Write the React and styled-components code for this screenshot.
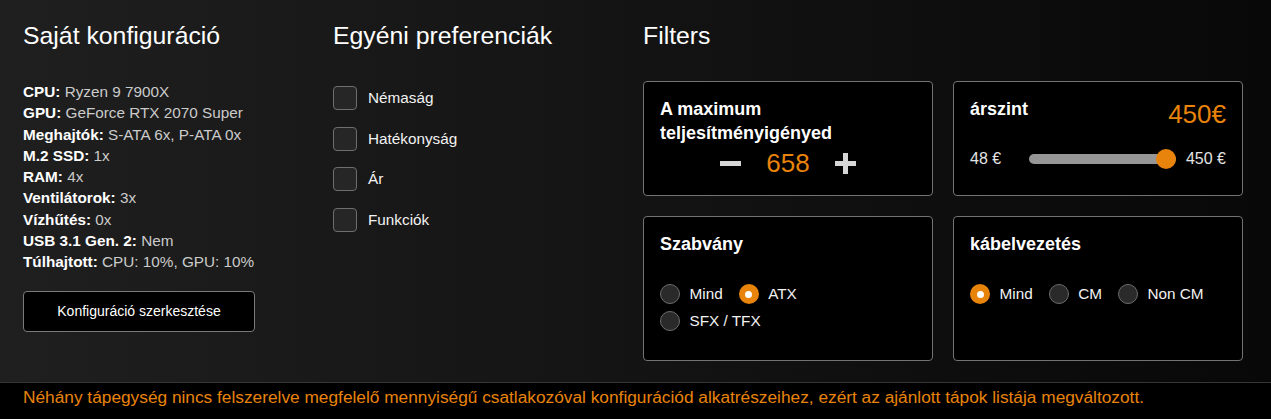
import React from "react";
import styled, { createGlobalStyle } from "styled-components";

const ORANGE = "#e8830b";

const Global = createGlobalStyle`
  html, body { margin: 0; padding: 0; background: #000; }
  body { font-family: "Liberation Sans", Arial, sans-serif; color: #fff; }
  * { box-sizing: border-box; }
`;

const Page = styled.div`
  width: 1271px;
  display: flex;
  flex-direction: column;
`;

const Main = styled.main`
  display: flex;
  padding: 22px 28px 21px 23px;
  background: linear-gradient(to right, #1f1f1f, #080808);
`;

const Column = styled.section`
  width: ${(p) => p.$width}px;
  flex: none;
  display: flex;
  flex-direction: column;
`;

const Title = styled.h2`
  margin: 0;
  font-size: 24.8px;
  font-weight: 400;
  line-height: 28px;
  color: #fff;
`;

const SpecList = styled.ul`
  list-style: none;
  margin: 31px 0 0;
  padding: 0;
  font-size: 15.3px;
  line-height: 21.3px;
`;

const SpecItem = styled.li`
  color: #cbcbcb;
  white-space: nowrap;
  b {
    color: #fff;
    font-weight: 700;
  }
`;

const EditButton = styled.button`
  margin-top: 18px;
  width: 232px;
  height: 41px;
  background: #000;
  border: 1px solid #7a7a7a;
  border-radius: 4px;
  color: #fff;
  font-family: "Liberation Sans", Arial, sans-serif;
  font-size: 14px;
  cursor: pointer;
`;

const CheckList = styled.div`
  margin-top: 36px;
  display: flex;
  flex-direction: column;
  gap: 16.7px;
`;

const CheckRow = styled.label`
  display: flex;
  align-items: center;
  gap: 11px;
  height: 24px;
  font-size: 15.3px;
  color: #f2f2f2;
`;

const CheckBox = styled.span`
  width: 24px;
  height: 24px;
  border: 1px solid #6e6e6e;
  border-radius: 4px;
  background: #262626;
  flex: none;
`;

const CardGrid = styled.div`
  margin-top: 31px;
  display: grid;
  grid-template-columns: 290px 290px;
  grid-template-rows: 115px 145px;
  gap: 20px;
`;

const Card = styled.div`
  background: #000;
  border: 1px solid #737373;
  border-radius: 4px;
  padding: 15px 16px 16px;
  display: flex;
  flex-direction: column;
`;

const CardTitle = styled.h3`
  margin: 0;
  font-size: 18px;
  font-weight: 700;
  line-height: 24px;
  color: #fff;
`;

const Stepper = styled.div`
  margin-top: 3px;
  display: flex;
  justify-content: center;
  align-items: center;
  gap: 25px;
`;

const StepBtn = styled.button`
  background: none;
  border: none;
  padding: 0;
  width: 21px;
  height: 21px;
  display: flex;
  cursor: pointer;
  svg { display: block; }
`;

const BigNumber = styled.span`
  font-size: 26px;
  line-height: 30px;
  color: ${ORANGE};
`;

const TitleRow = styled.div`
  display: flex;
  justify-content: space-between;
  align-items: flex-start;
`;

const Price = styled.span`
  margin-top: 2px;
  font-size: 26px;
  line-height: 30px;
  color: ${ORANGE};
`;

const SliderRow = styled.div`
  margin-top: 20px;
  display: flex;
  align-items: center;
  height: 20px;
`;

const SliderLabel = styled.span`
  font-size: 16px;
  color: #e4e4e4;
  white-space: nowrap;
`;

const Slider = styled.div`
  position: relative;
  flex: 1;
  height: 20px;
  margin: 0 10px 0 28px;
  display: flex;
  align-items: center;
`;

const Track = styled.div`
  width: 100%;
  height: 10px;
  border-radius: 5px;
  background: #969696;
`;

const Thumb = styled.span`
  position: absolute;
  top: 0;
  width: 20px;
  height: 20px;
  border-radius: 50%;
  background: ${ORANGE};
`;

const RadioGroup = styled.div`
  margin-top: 28px;
  display: flex;
  flex-direction: column;
  gap: 7px;
`;

const RadioLine = styled.div`
  display: flex;
  align-items: center;
  gap: 16px;
`;

const RadioItem = styled.label`
  display: flex;
  align-items: center;
  gap: 9.5px;
  height: 20px;
  font-size: 15.3px;
  color: #f2f2f2;
`;

const RadioDot = styled.span`
  width: 20px;
  height: 20px;
  border-radius: 50%;
  flex: none;
  display: flex;
  align-items: center;
  justify-content: center;
  background: ${(p) => (p.$checked ? ORANGE : "#2a2a2a")};
  border: ${(p) => (p.$checked ? "none" : "1.5px solid #6c6c6c")};
  &::after {
    content: "";
    display: ${(p) => (p.$checked ? "block" : "none")};
    width: 7px;
    height: 7px;
    border-radius: 50%;
    background: #fff;
  }
`;

const Footer = styled.footer`
  background: #000;
  border-top: 1px solid #363636;
  padding: 4px 23px 16px;
  font-size: 17.3px;
  line-height: 20px;
  color: ${ORANGE};
  white-space: nowrap;
`;

const specs = [
  ["CPU:", "Ryzen 9 7900X"],
  ["GPU:", "GeForce RTX 2070 Super"],
  ["Meghajtók:", "S-ATA 6x, P-ATA 0x"],
  ["M.2 SSD:", "1x"],
  ["RAM:", "4x"],
  ["Ventilátorok:", "3x"],
  ["Vízhűtés:", "0x"],
  ["USB 3.1 Gen. 2:", "Nem"],
  ["Túlhajtott:", "CPU: 10%, GPU: 10%"],
];

const prefs = ["Némaság", "Hatékonyság", "Ár", "Funkciók"];

const MinusIcon = () => (
  <svg width="21" height="21" viewBox="0 0 21 21">
    <rect x="0" y="8" width="21" height="5" fill="#d6d6d6" />
  </svg>
);

const PlusIcon = () => (
  <svg width="21" height="21" viewBox="0 0 21 21">
    <rect x="0" y="8" width="21" height="5" fill="#d6d6d6" />
    <rect x="8" y="0" width="5" height="21" fill="#d6d6d6" />
  </svg>
);

const Radios = ({ lines, value }) => (
  <RadioGroup>
    {lines.map((line, i) => (
      <RadioLine key={i}>
        {line.map((opt) => (
          <RadioItem key={opt}>
            <RadioDot $checked={opt === value} />
            {opt}
          </RadioItem>
        ))}
      </RadioLine>
    ))}
  </RadioGroup>
);

export default function App() {
  const min = 48;
  const max = 450;
  const price = 450;
  const frac = (price - min) / (max - min);
  return (
    <Page>
      <Global />
      <Main>
        <Column $width={310}>
          <Title>Saját konfiguráció</Title>
          <SpecList>
            {specs.map(([k, v]) => (
              <SpecItem key={k}>
                <b>{k}</b> {v}
              </SpecItem>
            ))}
          </SpecList>
          <EditButton>Konfiguráció szerkesztése</EditButton>
        </Column>
        <Column $width={310}>
          <Title>Egyéni preferenciák</Title>
          <CheckList>
            {prefs.map((p) => (
              <CheckRow key={p}>
                <CheckBox />
                {p}
              </CheckRow>
            ))}
          </CheckList>
        </Column>
        <Column $width={600}>
          <Title>Filters</Title>
          <CardGrid>
            <Card>
              <CardTitle>A maximum teljesítményigényed</CardTitle>
              <Stepper>
                <StepBtn aria-label="minus">
                  <MinusIcon />
                </StepBtn>
                <BigNumber>658</BigNumber>
                <StepBtn aria-label="plus">
                  <PlusIcon />
                </StepBtn>
              </Stepper>
            </Card>
            <Card>
              <TitleRow>
                <CardTitle>árszint</CardTitle>
                <Price>{price}€</Price>
              </TitleRow>
              <SliderRow>
                <SliderLabel>{min} €</SliderLabel>
                <Slider>
                  <Track />
                  <Thumb style={{ left: `calc(${frac * 100}% - ${frac * 20}px)` }} />
                </Slider>
                <SliderLabel>{max} €</SliderLabel>
              </SliderRow>
            </Card>
            <Card>
              <CardTitle>Szabvány</CardTitle>
              <Radios lines={[["Mind", "ATX"], ["SFX / TFX"]]} value="ATX" />
            </Card>
            <Card>
              <CardTitle>kábelvezetés</CardTitle>
              <Radios lines={[["Mind", "CM", "Non CM"]]} value="Mind" />
            </Card>
          </CardGrid>
        </Column>
      </Main>
      <Footer>
        Néhány tápegység nincs felszerelve megfelelő mennyiségű csatlakozóval konfigurációd alkatrészeihez, ezért az ajánlott tápok listája megváltozott.
      </Footer>
    </Page>
  );
}
